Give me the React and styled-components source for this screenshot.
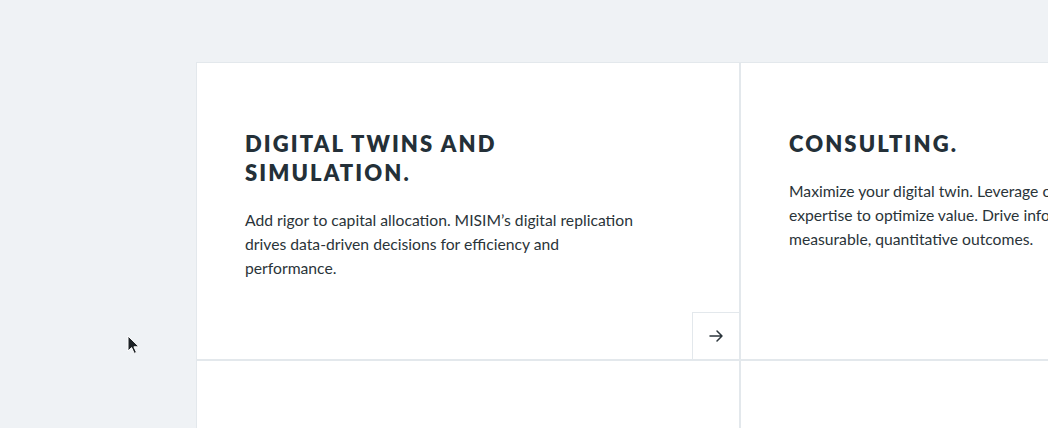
import React from "react";
import styled, { createGlobalStyle } from "styled-components";

const GlobalStyle = createGlobalStyle`
  html, body {
    margin: 0;
    padding: 0;
    background: #eff2f5;
    overflow: hidden;
  }
  body {
    font-family: "Lato", "Liberation Sans", sans-serif;
    color: #243038;
  }
`;

const cards = [
  {
    title: "Digital twins and simulation.",
    text: "Add rigor to capital allocation. MISIM’s digital replication drives data-driven decisions for efficiency and performance.",
    arrow: true,
  },
  {
    title: "Consulting.",
    text: "Maximize your digital twin. Leverage our team’s deep expertise to optimize value. Drive informed decisions with measurable, quantitative outcomes.",
  },
  { title: "", text: "" },
  { title: "", text: "" },
];

const ArrowIcon = () => (
  <svg width="16" height="16" viewBox="0 0 16 16" fill="none">
    <path
      d="M2 8h12M9 3l5 5-5 5"
      stroke="#2b353b"
      strokeWidth="1.5"
      strokeLinecap="round"
      strokeLinejoin="round"
    />
  </svg>
);

const Pointer = () => (
  <svg width="14" height="20" viewBox="0 0 14 20">
    <path
      d="M1 1v15l3.6-3.4 2.6 5.8 2.3-1-2.6-5.6H12z"
      fill="#1d2226"
      stroke="#fff"
      strokeWidth="1"
      strokeLinejoin="round"
    />
  </svg>
);

const App = () => {
  return (
    <>
      <GlobalStyle />
      <Page>
        <Grid>
          {cards.map((card, i) => (
            <Card key={i}>
              {card.title && <Title>{card.title}</Title>}
              {card.text && <Text>{card.text}</Text>}
              {card.arrow && (
                <ArrowButton aria-label="More">
                  <ArrowIcon />
                </ArrowButton>
              )}
            </Card>
          ))}
        </Grid>
        <Cursor>
          <Pointer />
        </Cursor>
      </Page>
    </>
  );
};

const Page = styled.main`
  position: relative;
  width: 1048px;
  height: 428px;
  overflow: hidden;
  padding: 62px 0 0 196px;
  box-sizing: border-box;
`;

const Grid = styled.section`
  display: grid;
  grid-template-columns: 544px 544px;
  grid-auto-rows: 298px;
  width: max-content;
  border-top: 1px solid #e3e8ec;
  border-left: 1px solid #e3e8ec;
`;

const Card = styled.article`
  position: relative;
  background: #ffffff;
  border-right: 2px solid #e3e8ec;
  border-bottom: 2px solid #e3e8ec;
  padding: 66px 48px 0;
`;

const Title = styled.h2`
  margin: 0 0 21px;
  max-width: 300px;
  font-size: 22px;
  line-height: 29px;
  font-weight: 800;
  letter-spacing: 2.1px;
  text-transform: uppercase;
  color: #243038;
`;

const Text = styled.p`
  margin: 0;
  max-width: 400px;
  font-size: 15.7px;
  line-height: 24px;
  color: #2a3439;
`;

const ArrowButton = styled.button`
  position: absolute;
  right: 0;
  bottom: 0;
  width: 47px;
  height: 47px;
  display: flex;
  align-items: center;
  justify-content: center;
  padding: 0;
  background: #ffffff;
  border: none;
  border-top: 1px solid #e3e8ec;
  border-left: 1px solid #e3e8ec;
  cursor: pointer;
`;

const Cursor = styled.div`
  position: absolute;
  left: 127px;
  top: 335px;
  pointer-events: none;
`;

export default App;
